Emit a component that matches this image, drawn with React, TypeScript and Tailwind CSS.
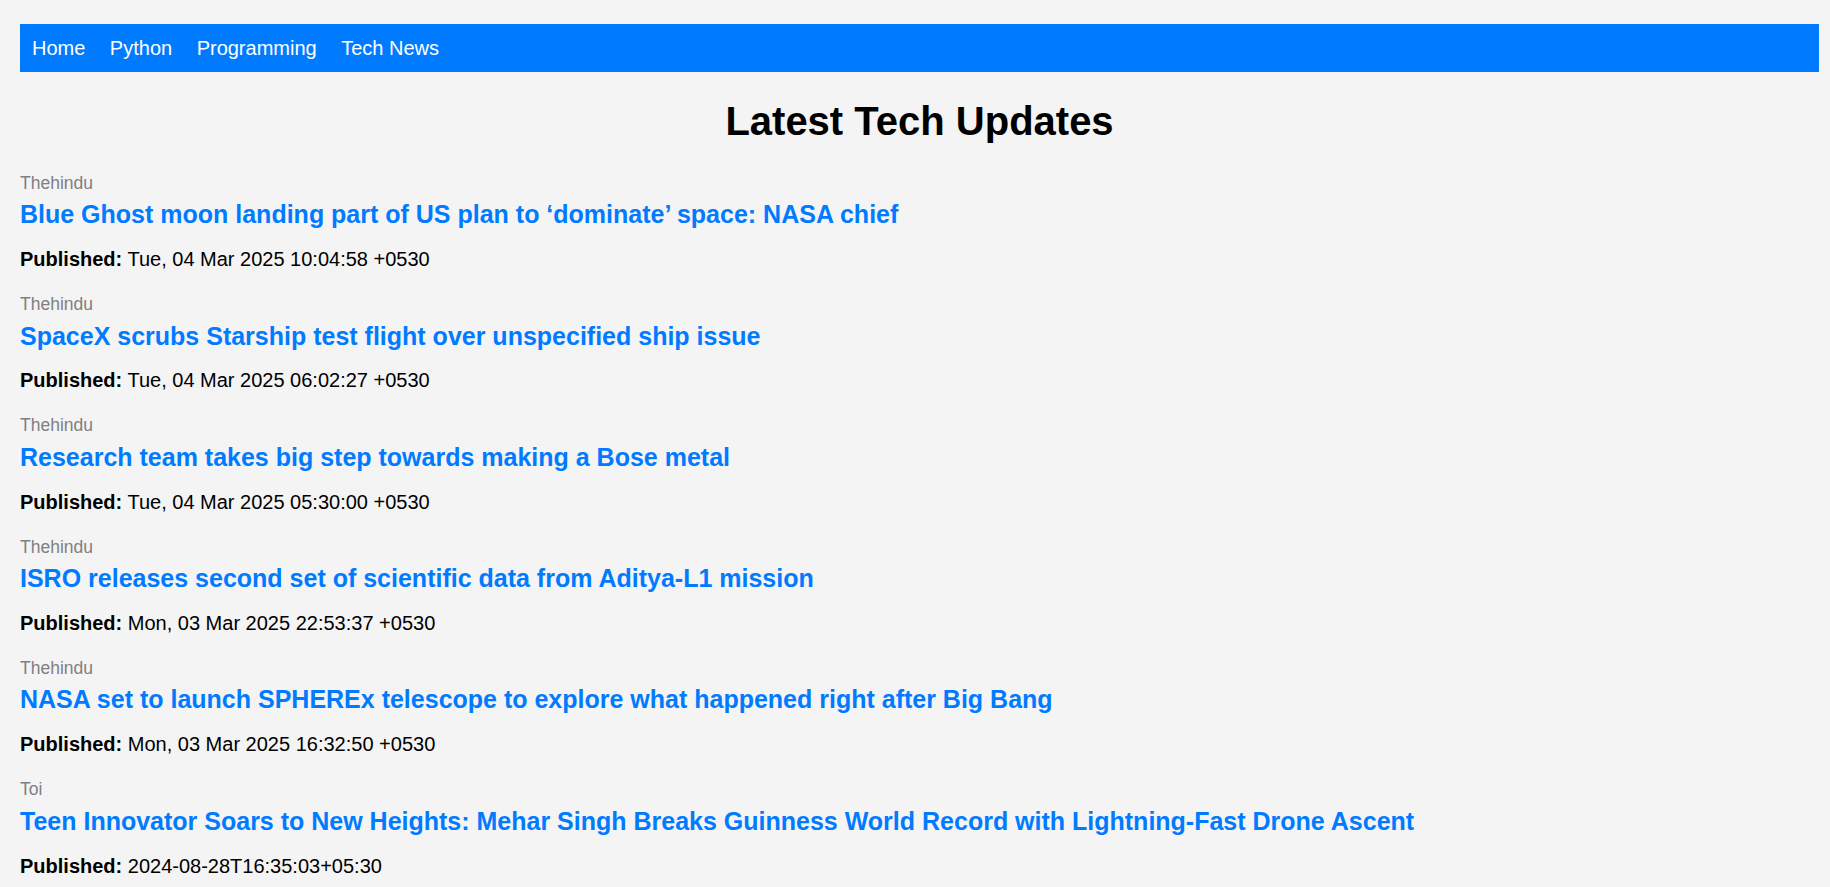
import React from 'react';

interface Article {
  source: string;
  title: string;
  published: string;
}

const articles: Article[] = [
  {
    source: 'Thehindu',
    title: 'Blue Ghost moon landing part of US plan to ‘dominate’ space: NASA chief',
    published: 'Tue, 04 Mar 2025 10:04:58 +0530',
  },
  {
    source: 'Thehindu',
    title: 'SpaceX scrubs Starship test flight over unspecified ship issue',
    published: 'Tue, 04 Mar 2025 06:02:27 +0530',
  },
  {
    source: 'Thehindu',
    title: 'Research team takes big step towards making a Bose metal',
    published: 'Tue, 04 Mar 2025 05:30:00 +0530',
  },
  {
    source: 'Thehindu',
    title: 'ISRO releases second set of scientific data from Aditya-L1 mission',
    published: 'Mon, 03 Mar 2025 22:53:37 +0530',
  },
  {
    source: 'Thehindu',
    title: 'NASA set to launch SPHEREx telescope to explore what happened right after Big Bang',
    published: 'Mon, 03 Mar 2025 16:32:50 +0530',
  },
  {
    source: 'Toi',
    title: 'Teen Innovator Soars to New Heights: Mehar Singh Breaks Guinness World Record with Lightning-Fast Drone Ascent',
    published: '2024-08-28T16:35:03+05:30',
  },
];

const links = ['Home', 'Python', 'Programming', 'Tech News'];

const App: React.FC = () => {
  return (
    <div className="h-[887px] overflow-hidden bg-[#f4f4f4] pt-6 pl-5 pr-[11px] font-['Liberation_Sans',Arial,sans-serif] text-black">
      {/* top nav */}
      <nav className="flex h-12 items-center gap-[24.5px] bg-[#007bff] pl-[12px]">
        {links.map((l) => (
          <a key={l} href="#" className="text-[20px] leading-[23px] text-white">
            {l}
          </a>
        ))}
      </nav>

      <h1 className="mt-[26px] text-center text-[40px] font-bold leading-[46px]">Latest Tech Updates</h1>

      <div className="mt-[28.7px]">
        {articles.map((a, i) => (
          <div key={i} className="mb-[22.8px]">
            <div className="text-[17.5px] leading-[20.1px] text-[#808080]">{a.source}</div>
            <a href="#" className="mt-[7.5px] block text-[25px] font-bold leading-[28.7px] text-[#007bff]">
              {a.title}
            </a>
            <p className="mt-[19.2px] text-[20px] leading-[23px]">
              <span className="font-bold">Published:</span> {a.published}
            </p>
          </div>
        ))}
      </div>
    </div>
  );
};

export default App;
